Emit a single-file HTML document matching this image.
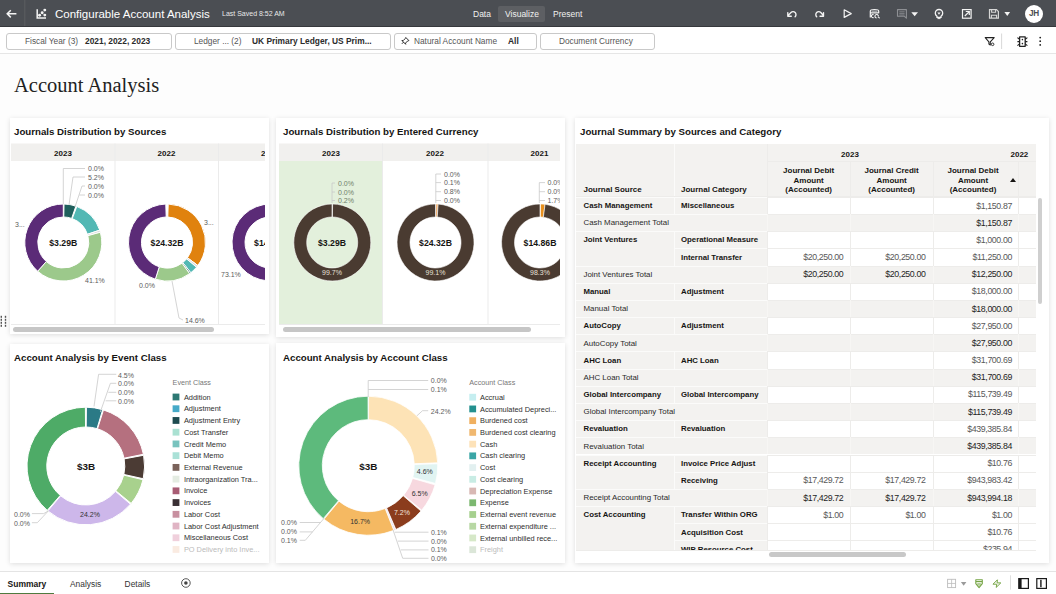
<!DOCTYPE html><html><head><meta charset="utf-8"><style>
*{box-sizing:border-box;margin:0;padding:0}
html,body{width:1056px;height:594px;overflow:hidden;background:#fdfdfd;font-family:"Liberation Sans",sans-serif;color:#161513}
.a{position:absolute;white-space:nowrap}
#top{position:absolute;left:0;top:0;width:1056px;height:27px;background:#4b4e53}
#fbar{position:absolute;left:0;top:27px;width:1056px;height:27px;background:#fff;border-bottom:1px solid #e6e6e6}
.pill{position:absolute;top:33px;height:17px;border:1px solid #c9c9c9;border-radius:3px;background:#fff;font-size:8.3px;line-height:15px;color:#555}
.pill b{color:#2b2b2b;font-weight:bold;font-size:8.4px}
.card{position:absolute;background:#fff;box-shadow:0 1px 5px rgba(0,0,0,.13)}
.ct{position:absolute;font-size:9.7px;font-weight:bold;color:#161513}
#bbar{position:absolute;left:0;top:571px;width:1056px;height:23px;background:#fff;border-top:1px solid #e4e4e4}
.tb{position:absolute;font-size:8px;color:#333}
.lg{position:absolute;font-size:7.2px;color:#444}
</style></head><body>
<div id="top">
</div>
<div class="a" style="left:55px;top:7.7px;font-size:11.5px;color:#fff">Configurable Account Analysis</div>
<div class="a" style="left:222px;top:10px;font-size:7px;color:#e8e8e8">Last Saved 8:52 AM</div>
<div class="a" style="left:498px;top:6px;width:47px;height:16px;background:#5d5f63;border-radius:2px"></div>
<div class="a" style="left:473px;top:9px;font-size:8.5px;color:#f0f0f0">Data</div>
<div class="a" style="left:505px;top:9px;font-size:8.5px;color:#f0f0f0">Visualize</div>
<div class="a" style="left:553px;top:9px;font-size:8.5px;color:#f0f0f0">Present</div>
<div class="a" style="left:1025px;top:5px;width:18px;height:18px;border-radius:50%;background:#fff;font-size:8.2px;font-weight:bold;color:#4b4e53;text-align:center;line-height:18px;letter-spacing:-0.3px">JH</div>
<div id="fbar"></div>
<div class="pill" style="left:6px;width:166px"><span class="a" style="left:18px">Fiscal Year (3)</span><b class="a" style="left:78px">2021, 2022, 2023</b></div>
<div class="pill" style="left:175px;width:216px"><span class="a" style="left:18px">Ledger ... (2)</span><b class="a" style="left:76px">UK Primary Ledger, US Prim...</b></div>
<div class="pill" style="left:394px;width:143px"><span class="a" style="left:19px">Natural Account Name</span><b class="a" style="left:113px">All</b></div>
<div class="pill" style="left:540px;width:115px"><span class="a" style="left:18px">Document Currency</span></div>
<div class="a" style="left:14px;top:73.5px;font-family:'Liberation Serif',serif;font-size:20.5px;color:#222">Account Analysis</div>
<div class="card" style="left:10px;top:117.5px;width:259px;height:216.5px"></div>
<div class="card" style="left:276px;top:117.5px;width:289px;height:219.5px"></div>
<div class="card" style="left:574.5px;top:117.5px;width:474.5px;height:445.5px"></div>
<div class="card" style="left:10px;top:343.5px;width:259px;height:219.5px"></div>
<div class="card" style="left:276px;top:343px;width:289px;height:220px"></div>
<div class="ct" style="left:14px;top:126px">Journals Distribution by Sources</div>
<div class="ct" style="left:283px;top:126px">Journals Distribution by Entered Currency</div>
<div class="ct" style="left:580px;top:126px">Journal Summary by Sources and Category</div>
<div class="ct" style="left:14px;top:352px">Account Analysis by Event Class</div>
<div class="ct" style="left:283px;top:352px">Account Analysis by Account Class</div>
<svg class="a" style="left:0;top:0" width="1056" height="594" font-family="Liberation Sans, sans-serif"><defs><clipPath id="c1"><rect x="11" y="143" width="254" height="191"/></clipPath><clipPath id="c2"><rect x="279" y="143" width="281" height="191"/></clipPath></defs><g clip-path="url(#c1)"><rect x="11" y="143.5" width="254" height="17.5" fill="#f1f0ee"/><rect x="114.5" y="143.5" width="1" height="181" fill="#ebebeb"/><rect x="218" y="143.5" width="1" height="181" fill="#ebebeb"/><rect x="11" y="324" width="254" height="1" fill="#ebebeb"/><text x="63" y="156" font-size="8" fill="#161513" text-anchor="middle" font-weight="bold">2023</text><text x="166.5" y="156" font-size="8" fill="#161513" text-anchor="middle" font-weight="bold">2022</text><text x="270" y="156" font-size="8" fill="#161513" text-anchor="middle" font-weight="bold">2021</text><path d="M64.03 204.01A38.5 38.5 0 0 1 75.89 206.12L71.64 218.40A25.5 25.5 0 0 0 63.78 217.00Z" fill="#1f5f5c" stroke="#fff" stroke-width="1"/><path d="M76.80 206.44A38.5 38.5 0 0 1 99.76 230.14L87.45 234.32A25.5 25.5 0 0 0 72.24 218.62Z" fill="#52b8b4" stroke="#fff" stroke-width="1"/><path d="M99.76 230.14A38.5 38.5 0 0 1 100.40 232.22L87.87 235.69A25.5 25.5 0 0 0 87.45 234.32Z" fill="#dcdcdc" stroke="#fff" stroke-width="1"/><path d="M100.40 232.22A38.5 38.5 0 0 1 37.66 271.22L46.32 261.52A25.5 25.5 0 0 0 87.87 235.69Z" fill="#9cc98b" stroke="#fff" stroke-width="1"/><path d="M37.66 271.22A38.5 38.5 0 0 1 63.30 204.00L63.30 217.00A25.5 25.5 0 0 0 46.32 261.52Z" fill="#5b2b77" stroke="#fff" stroke-width="1"/><path d="M168.21 204.02A38.5 38.5 0 0 1 197.86 265.52L187.44 257.75A25.5 25.5 0 0 0 167.80 217.01Z" fill="#e0820e" stroke="#fff" stroke-width="1"/><path d="M197.86 265.52A38.5 38.5 0 0 1 196.51 267.23L186.55 258.88A25.5 25.5 0 0 0 187.44 257.75Z" fill="#dcdcdc" stroke="#fff" stroke-width="1"/><path d="M196.51 267.23A38.5 38.5 0 0 1 190.79 272.77L182.76 262.55A25.5 25.5 0 0 0 186.55 258.88Z" fill="#52b8b4" stroke="#fff" stroke-width="1"/><path d="M190.79 272.77A38.5 38.5 0 0 1 189.63 273.65L181.99 263.13A25.5 25.5 0 0 0 182.76 262.55Z" fill="#1f5f5c" stroke="#fff" stroke-width="1"/><path d="M189.63 273.65A38.5 38.5 0 0 1 155.33 279.19L159.27 266.80A25.5 25.5 0 0 0 181.99 263.13Z" fill="#9cc98b" stroke="#fff" stroke-width="1"/><path d="M155.33 279.19A38.5 38.5 0 0 1 165.79 204.02L166.20 217.01A25.5 25.5 0 0 0 159.27 266.80Z" fill="#5b2b77" stroke="#fff" stroke-width="1"/><path d="M271.71 204.02A38.5 38.5 0 0 1 307.47 231.76L294.99 235.39A25.5 25.5 0 0 0 271.30 217.01Z" fill="#e0820e" stroke="#fff" stroke-width="1"/><path d="M307.47 231.76A38.5 38.5 0 0 1 308.98 243.71L295.99 243.30A25.5 25.5 0 0 0 294.99 235.39Z" fill="#52b8b4" stroke="#fff" stroke-width="1"/><path d="M308.98 243.71A38.5 38.5 0 0 1 308.73 247.09L295.82 245.54A25.5 25.5 0 0 0 295.99 243.30Z" fill="#9cc98b" stroke="#fff" stroke-width="1"/><path d="M308.73 247.09A38.5 38.5 0 1 1 270.50 204.00L270.50 217.00A25.5 25.5 0 1 0 295.82 245.54Z" fill="#5b2b77" stroke="#fff" stroke-width="1"/><polyline points="63.3,204 63.3,168.5 85,168.5" fill="none" stroke="#c9c9c9" stroke-width="0.8"/><polyline points="69,205 73,177 85,177" fill="none" stroke="#c9c9c9" stroke-width="0.8"/><polyline points="75,207 82,186 85,186" fill="none" stroke="#c9c9c9" stroke-width="0.8"/><polyline points="79.3,195 85,195" fill="none" stroke="#c9c9c9" stroke-width="0.8"/><text x="88" y="171.0" font-size="7" fill="#5c5c5c" text-anchor="start" font-weight="normal">0.0%</text><text x="88" y="179.5" font-size="7" fill="#5c5c5c" text-anchor="start" font-weight="normal">5.2%</text><text x="88" y="188.5" font-size="7" fill="#5c5c5c" text-anchor="start" font-weight="normal">0.0%</text><text x="88" y="197.5" font-size="7" fill="#5c5c5c" text-anchor="start" font-weight="normal">0.0%</text><text x="15" y="227" font-size="7" fill="#5c5c5c" text-anchor="start" font-weight="normal">3...</text><text x="85" y="283" font-size="7" fill="#5c5c5c" text-anchor="start" font-weight="normal">41.1%</text><text x="204" y="225" font-size="7" fill="#5c5c5c" text-anchor="start" font-weight="normal">3...</text><text x="139" y="288" font-size="7" fill="#5c5c5c" text-anchor="start" font-weight="normal">0.0%</text><polyline points="172,281 179,318 183,320" fill="none" stroke="#c9c9c9" stroke-width="0.8"/><text x="185" y="322.5" font-size="7" fill="#5c5c5c" text-anchor="start" font-weight="normal">14.6%</text><text x="221" y="276.5" font-size="7" fill="#5c5c5c" text-anchor="start" font-weight="normal">73.1%</text></g><g clip-path="url(#c2)"><rect x="279" y="143.5" width="285" height="17.5" fill="#f1f0ee"/><rect x="279" y="161" width="103" height="163.5" fill="#e3f0dc"/><rect x="382" y="143.5" width="1" height="181" fill="#ebebeb"/><rect x="487.5" y="143.5" width="1" height="181" fill="#ebebeb"/><rect x="279" y="324" width="285" height="1" fill="#ebebeb"/><text x="331" y="156" font-size="8" fill="#161513" text-anchor="middle" font-weight="bold">2023</text><text x="435" y="156" font-size="8" fill="#161513" text-anchor="middle" font-weight="bold">2022</text><text x="539.5" y="156" font-size="8" fill="#161513" text-anchor="middle" font-weight="bold">2021</text><path d="M332.00 204.00A38.5 38.5 0 0 1 332.36 204.00L332.24 217.00A25.5 25.5 0 0 0 332.00 217.00Z" fill="#e6e6e6" stroke="#fff" stroke-width="0.6"/><path d="M332.60 204.00A38.5 38.5 0 1 1 332.00 204.00L332.00 217.00A25.5 25.5 0 1 0 332.40 217.00Z" fill="#4a3b31" stroke="#fff" stroke-width="0.6"/><path d="M435.98 204.00A38.5 38.5 0 0 1 438.16 204.09L437.26 217.06A25.5 25.5 0 0 0 435.82 217.00Z" fill="#f0a050" stroke="#fff" stroke-width="0.6"/><path d="M438.16 204.09A38.5 38.5 0 1 1 435.50 204.00L435.50 217.00A25.5 25.5 0 1 0 437.26 217.06Z" fill="#4a3b31" stroke="#fff" stroke-width="0.6"/><path d="M540.48 204.00A38.5 38.5 0 0 1 545.07 204.33L543.35 217.22A25.5 25.5 0 0 0 540.32 217.00Z" fill="#e8901e" stroke="#fff" stroke-width="0.6"/><path d="M545.07 204.33A38.5 38.5 0 1 1 540.00 204.00L540.00 217.00A25.5 25.5 0 1 0 543.35 217.22Z" fill="#4a3b31" stroke="#fff" stroke-width="0.6"/><polyline points="332,203 332,183 335,183" fill="none" stroke="#c9c9c9" stroke-width="0.8"/><polyline points="332,192 335,192" fill="none" stroke="#c9c9c9" stroke-width="0.8"/><polyline points="332,200.5 335,200.5" fill="none" stroke="#c9c9c9" stroke-width="0.8"/><text x="338" y="185.5" font-size="7" fill="#6f7f6a" text-anchor="start" font-weight="normal">0.0%</text><text x="338" y="194.5" font-size="7" fill="#6f7f6a" text-anchor="start" font-weight="normal">0.0%</text><text x="338" y="203.0" font-size="7" fill="#6f7f6a" text-anchor="start" font-weight="normal">0.2%</text><polyline points="435.8,203 435.8,174 441,174" fill="none" stroke="#c9c9c9" stroke-width="0.8"/><polyline points="435.8,182.6 441,182.6" fill="none" stroke="#c9c9c9" stroke-width="0.8"/><polyline points="435.8,191.7 441,191.7" fill="none" stroke="#c9c9c9" stroke-width="0.8"/><polyline points="435.8,200.5 441,200.5" fill="none" stroke="#c9c9c9" stroke-width="0.8"/><text x="444" y="176.7" font-size="7" fill="#5c5c5c" text-anchor="start" font-weight="normal">0.0%</text><text x="444" y="185.1" font-size="7" fill="#5c5c5c" text-anchor="start" font-weight="normal">0.1%</text><text x="444" y="194.2" font-size="7" fill="#5c5c5c" text-anchor="start" font-weight="normal">0.8%</text><text x="444" y="203.0" font-size="7" fill="#5c5c5c" text-anchor="start" font-weight="normal">0.0%</text><polyline points="539.3,203 539.3,182.6 545,182.6" fill="none" stroke="#c9c9c9" stroke-width="0.8"/><polyline points="539.3,191.7 545,191.7" fill="none" stroke="#c9c9c9" stroke-width="0.8"/><polyline points="539.3,200.5 545,200.5" fill="none" stroke="#c9c9c9" stroke-width="0.8"/><text x="547.5" y="185.1" font-size="7" fill="#5c5c5c" text-anchor="start" font-weight="normal">0.0%</text><text x="547.5" y="194.2" font-size="7" fill="#5c5c5c" text-anchor="start" font-weight="normal">0.0%</text><text x="547.5" y="203.0" font-size="7" fill="#5c5c5c" text-anchor="start" font-weight="normal">1.7%</text><text x="332" y="275" font-size="7" fill="#e8e0d8" text-anchor="middle" font-weight="normal">99.7%</text><text x="435.5" y="275" font-size="7" fill="#e8e0d8" text-anchor="middle" font-weight="normal">99.1%</text><text x="540" y="275" font-size="7" fill="#e8e0d8" text-anchor="middle" font-weight="normal">98.3%</text></g><g clip-path="url(#c1)"><text x="63.3" y="246" font-size="8.7" fill="#161513" text-anchor="middle" font-weight="bold">$3.29B</text><text x="167" y="246" font-size="8.7" fill="#161513" text-anchor="middle" font-weight="bold">$24.32B</text><text x="270.5" y="246" font-size="8.7" fill="#161513" text-anchor="middle" font-weight="bold">$14.86B</text></g><g clip-path="url(#c2)"><text x="332" y="246" font-size="8.7" fill="#161513" text-anchor="middle" font-weight="bold">$3.29B</text><text x="435.5" y="246" font-size="8.7" fill="#161513" text-anchor="middle" font-weight="bold">$24.32B</text><text x="540" y="246" font-size="8.7" fill="#161513" text-anchor="middle" font-weight="bold">$14.86B</text></g><rect x="13" y="327" width="201" height="5" rx="2.5" fill="#c6c6c6"/><rect x="283" y="327" width="248" height="5" rx="2.5" fill="#c6c6c6"/></svg>
<svg class="a" style="left:0;top:0" width="1056" height="594" font-family="Liberation Sans, sans-serif"><path d="M86.42 407.20A58.8 58.8 0 0 1 102.70 409.68L97.01 428.64A39 39 0 0 0 86.21 427.00Z" fill="#2b7a86" stroke="#fff" stroke-width="1"/><path d="M103.48 409.92A58.8 58.8 0 0 1 143.42 454.28L124.02 458.22A39 39 0 0 0 97.53 428.81Z" fill="#b5707f" stroke="#fff" stroke-width="1"/><path d="M143.62 455.28A58.8 58.8 0 0 1 143.21 478.73L123.88 474.44A39 39 0 0 0 124.15 458.89Z" fill="#4b3b34" stroke="#fff" stroke-width="1"/><path d="M142.98 479.73A58.8 58.8 0 0 1 131.17 503.40L115.89 490.81A39 39 0 0 0 123.72 475.10Z" fill="#a8d18d" stroke="#fff" stroke-width="1"/><path d="M130.51 504.19A58.8 58.8 0 0 1 47.85 510.91L60.63 495.79A39 39 0 0 0 115.46 491.33Z" fill="#cdb7ea" stroke="#fff" stroke-width="1"/><path d="M47.22 510.38A58.8 58.8 0 0 1 85.39 407.20L85.53 427.00A39 39 0 0 0 60.21 495.43Z" fill="#4eab67" stroke="#fff" stroke-width="1"/><polyline points="94,406.5 98.6,374.3 116.3,374.3" fill="none" stroke="#c9c9c9" stroke-width="0.8"/><polyline points="100.3,412 110.4,383.3 116.3,383.3" fill="none" stroke="#c9c9c9" stroke-width="0.8"/><polyline points="108.3,392.3 116.3,392.3" fill="none" stroke="#c9c9c9" stroke-width="0.8"/><polyline points="105.6,400.8 116.3,400.8" fill="none" stroke="#c9c9c9" stroke-width="0.8"/><text x="118" y="377.6" font-size="7" fill="#5c5c5c" text-anchor="start" font-weight="normal">4.5%</text><text x="118" y="386.4" font-size="7" fill="#5c5c5c" text-anchor="start" font-weight="normal">0.0%</text><text x="118" y="395.3" font-size="7" fill="#5c5c5c" text-anchor="start" font-weight="normal">0.0%</text><text x="118" y="403.7" font-size="7" fill="#5c5c5c" text-anchor="start" font-weight="normal">0.0%</text><polyline points="48.4,510.9 43.7,513.6 31.9,513.6" fill="none" stroke="#c9c9c9" stroke-width="0.8"/><polyline points="48.4,510.9 37.3,522.7 31.9,522.7" fill="none" stroke="#c9c9c9" stroke-width="0.8"/><text x="14" y="517" font-size="7" fill="#5c5c5c" text-anchor="start" font-weight="normal">0.0%</text><text x="14" y="525.8" font-size="7" fill="#5c5c5c" text-anchor="start" font-weight="normal">0.0%</text><text x="90" y="517" font-size="7" fill="#333" text-anchor="middle" font-weight="normal">24.2%</text><text x="86" y="470" font-size="9.9" fill="#161513" text-anchor="middle" font-weight="bold">$3B</text><text x="172.6" y="385" font-size="7.2" fill="#777" text-anchor="start" font-weight="normal">Event Class</text><rect x="172.6" y="393.60" width="6.8" height="6.8" fill="#2d7873"/><text x="183.9" y="399.6" font-size="7.4" fill="#2e2e2e" text-anchor="start" font-weight="normal">Addition</text><rect x="172.6" y="405.33" width="6.8" height="6.8" fill="#46aac8"/><text x="183.9" y="411.33000000000004" font-size="7.4" fill="#2e2e2e" text-anchor="start" font-weight="normal">Adjustment</text><rect x="172.6" y="417.06" width="6.8" height="6.8" fill="#1e4b50"/><text x="183.9" y="423.06" font-size="7.4" fill="#2e2e2e" text-anchor="start" font-weight="normal">Adjustment Entry</text><rect x="172.6" y="428.79" width="6.8" height="6.8" fill="#aae1d2"/><text x="183.9" y="434.79" font-size="7.4" fill="#2e2e2e" text-anchor="start" font-weight="normal">Cost Transfer</text><rect x="172.6" y="440.52" width="6.8" height="6.8" fill="#78c3be"/><text x="183.9" y="446.52000000000004" font-size="7.4" fill="#2e2e2e" text-anchor="start" font-weight="normal">Credit Memo</text><rect x="172.6" y="452.25" width="6.8" height="6.8" fill="#aae1d7"/><text x="183.9" y="458.25" font-size="7.4" fill="#2e2e2e" text-anchor="start" font-weight="normal">Debit Memo</text><rect x="172.6" y="463.98" width="6.8" height="6.8" fill="#7a625a"/><text x="183.9" y="469.98" font-size="7.4" fill="#2e2e2e" text-anchor="start" font-weight="normal">External Revenue</text><rect x="172.6" y="475.71" width="6.8" height="6.8" fill="#e4ece2"/><text x="183.9" y="481.71000000000004" font-size="7.4" fill="#2e2e2e" text-anchor="start" font-weight="normal">Intraorganization Tra...</text><rect x="172.6" y="487.44" width="6.8" height="6.8" fill="#a85c74"/><text x="183.9" y="493.44000000000005" font-size="7.4" fill="#2e2e2e" text-anchor="start" font-weight="normal">Invoice</text><rect x="172.6" y="499.17" width="6.8" height="6.8" fill="#3a3034"/><text x="183.9" y="505.17" font-size="7.4" fill="#2e2e2e" text-anchor="start" font-weight="normal">Invoices</text><rect x="172.6" y="510.90" width="6.8" height="6.8" fill="#c890a0"/><text x="183.9" y="516.9" font-size="7.4" fill="#2e2e2e" text-anchor="start" font-weight="normal">Labor Cost</text><rect x="172.6" y="522.63" width="6.8" height="6.8" fill="#e0b4c4"/><text x="183.9" y="528.63" font-size="7.4" fill="#2e2e2e" text-anchor="start" font-weight="normal">Labor Cost Adjustment</text><rect x="172.6" y="534.36" width="6.8" height="6.8" fill="#f0d0dc"/><text x="183.9" y="540.36" font-size="7.4" fill="#2e2e2e" text-anchor="start" font-weight="normal">Miscellaneous Cost</text><rect x="172.6" y="546.09" width="6.8" height="6.8" fill="#f3d2bc" opacity="0.45"/><text x="183.9" y="552.09" font-size="7.4" fill="#bbb" text-anchor="start" font-weight="normal">PO Delivery into Inve...</text><path d="M368.54 396.20A69.5 69.5 0 0 1 437.74 462.79L414.26 463.77A46 46 0 0 0 368.46 419.70Z" fill="#fde3b6" stroke="#fff" stroke-width="0.8"/><path d="M437.77 463.76A69.5 69.5 0 0 1 435.49 483.45L412.77 477.45A46 46 0 0 0 414.28 464.42Z" fill="#e1f4f2" stroke="#fff" stroke-width="0.8"/><path d="M435.11 484.86A69.5 69.5 0 0 1 421.70 510.19L403.64 495.15A46 46 0 0 0 412.52 478.38Z" fill="#f7d8df" stroke="#fff" stroke-width="0.8"/><path d="M420.99 511.02A69.5 69.5 0 0 1 395.90 529.48L386.57 507.92A46 46 0 0 0 403.17 495.70Z" fill="#8b3c1d" stroke="#fff" stroke-width="0.8"/><path d="M395.23 529.77A69.5 69.5 0 0 1 394.34 530.14L385.53 508.35A46 46 0 0 0 386.13 508.11Z" fill="#b89ad8" stroke="#fff" stroke-width="0.8"/><path d="M393.77 530.36A69.5 69.5 0 0 1 324.00 519.25L338.98 501.14A46 46 0 0 0 385.16 508.50Z" fill="#f5b962" stroke="#fff" stroke-width="0.8"/><path d="M323.26 518.63A69.5 69.5 0 0 1 368.06 396.20L368.14 419.70A46 46 0 0 0 338.49 500.73Z" fill="#5dba7c" stroke="#fff" stroke-width="0.8"/><polyline points="368.2,397 368.2,380.5 428.2,380.5" fill="none" stroke="#c9c9c9" stroke-width="0.8"/><polyline points="368.2,389.5 428.2,389.5" fill="none" stroke="#c9c9c9" stroke-width="0.8"/><polyline points="416.8,415.9 422.5,410.7 428.2,410.7" fill="none" stroke="#c9c9c9" stroke-width="0.8"/><text x="430.8" y="383.4" font-size="7" fill="#5c5c5c" text-anchor="start" font-weight="normal">0.0%</text><text x="430.8" y="392.4" font-size="7" fill="#5c5c5c" text-anchor="start" font-weight="normal">0.1%</text><text x="430.8" y="413.7" font-size="7" fill="#5c5c5c" text-anchor="start" font-weight="normal">24.2%</text><polyline points="393,529.8 402.7,558.3 428.5,558.3" fill="none" stroke="#c9c9c9" stroke-width="0.8"/><polyline points="394.748,532.2 428.5,532.2" fill="none" stroke="#c9c9c9" stroke-width="0.8"/><polyline points="397.774,541.1 428.5,541.1" fill="none" stroke="#c9c9c9" stroke-width="0.8"/><polyline points="400.766,549.9 428.5,549.9" fill="none" stroke="#c9c9c9" stroke-width="0.8"/><text x="430.9" y="534.7" font-size="7" fill="#5c5c5c" text-anchor="start" font-weight="normal">0.1%</text><text x="430.9" y="543.6" font-size="7" fill="#5c5c5c" text-anchor="start" font-weight="normal">0.0%</text><text x="430.9" y="552.4" font-size="7" fill="#5c5c5c" text-anchor="start" font-weight="normal">0.1%</text><text x="430.9" y="561.3" font-size="7" fill="#5c5c5c" text-anchor="start" font-weight="normal">0.0%</text><polyline points="324.6,517.7 305.3,540.3 299.7,540.3" fill="none" stroke="#c9c9c9" stroke-width="0.8"/><polyline points="320.6,522.5 299.7,522.5" fill="none" stroke="#c9c9c9" stroke-width="0.8"/><polyline points="312.5,531.9 299.7,531.9" fill="none" stroke="#c9c9c9" stroke-width="0.8"/><text x="281" y="525.1" font-size="7" fill="#5c5c5c" text-anchor="start" font-weight="normal">0.0%</text><text x="281" y="534.2" font-size="7" fill="#5c5c5c" text-anchor="start" font-weight="normal">0.0%</text><text x="281" y="542.9" font-size="7" fill="#5c5c5c" text-anchor="start" font-weight="normal">0.1%</text><text x="424.8" y="474.2" font-size="7" fill="#333" text-anchor="middle" font-weight="normal">4.6%</text><text x="419.7" y="496.1" font-size="7" fill="#333" text-anchor="middle" font-weight="normal">6.5%</text><text x="401.9" y="515" font-size="7" fill="#f3e6df" text-anchor="middle" font-weight="normal">7.2%</text><text x="360.1" y="524.1" font-size="7" fill="#333" text-anchor="middle" font-weight="normal">16.7%</text><text x="368.4" y="469.7" font-size="9.9" fill="#161513" text-anchor="middle" font-weight="bold">$3B</text><text x="469.3" y="385" font-size="7.2" fill="#777" text-anchor="start" font-weight="normal">Account Class</text><rect x="469.3" y="393.80" width="6.8" height="6.8" fill="#c5eef0"/><text x="480" y="399.8" font-size="7.4" fill="#2e2e2e" text-anchor="start" font-weight="normal">Accrual</text><rect x="469.3" y="405.53" width="6.8" height="6.8" fill="#23908f"/><text x="480" y="411.53000000000003" font-size="7.4" fill="#2e2e2e" text-anchor="start" font-weight="normal">Accumulated Depreci...</text><rect x="469.3" y="417.26" width="6.8" height="6.8" fill="#f0b060"/><text x="480" y="423.26" font-size="7.4" fill="#2e2e2e" text-anchor="start" font-weight="normal">Burdened cost</text><rect x="469.3" y="428.99" width="6.8" height="6.8" fill="#f0b870"/><text x="480" y="434.99" font-size="7.4" fill="#2e2e2e" text-anchor="start" font-weight="normal">Burdened cost clearing</text><rect x="469.3" y="440.72" width="6.8" height="6.8" fill="#fde2b8"/><text x="480" y="446.72" font-size="7.4" fill="#2e2e2e" text-anchor="start" font-weight="normal">Cash</text><rect x="469.3" y="452.45" width="6.8" height="6.8" fill="#3aa5a5"/><text x="480" y="458.45000000000005" font-size="7.4" fill="#2e2e2e" text-anchor="start" font-weight="normal">Cash clearing</text><rect x="469.3" y="464.18" width="6.8" height="6.8" fill="#e2f0f0"/><text x="480" y="470.18" font-size="7.4" fill="#2e2e2e" text-anchor="start" font-weight="normal">Cost</text><rect x="469.3" y="475.91" width="6.8" height="6.8" fill="#c8ece4"/><text x="480" y="481.91" font-size="7.4" fill="#2e2e2e" text-anchor="start" font-weight="normal">Cost clearing</text><rect x="469.3" y="487.64" width="6.8" height="6.8" fill="#d8b8b4"/><text x="480" y="493.64" font-size="7.4" fill="#2e2e2e" text-anchor="start" font-weight="normal">Depreciation Expense</text><rect x="469.3" y="499.37" width="6.8" height="6.8" fill="#7cb870"/><text x="480" y="505.37" font-size="7.4" fill="#2e2e2e" text-anchor="start" font-weight="normal">Expense</text><rect x="469.3" y="511.10" width="6.8" height="6.8" fill="#a6d08e"/><text x="480" y="517.1" font-size="7.4" fill="#2e2e2e" text-anchor="start" font-weight="normal">External event revenue</text><rect x="469.3" y="522.83" width="6.8" height="6.8" fill="#b8d8a4"/><text x="480" y="528.83" font-size="7.4" fill="#2e2e2e" text-anchor="start" font-weight="normal">External expenditure ...</text><rect x="469.3" y="534.56" width="6.8" height="6.8" fill="#d6e8c8"/><text x="480" y="540.5600000000001" font-size="7.4" fill="#2e2e2e" text-anchor="start" font-weight="normal">External unbilled rece...</text><rect x="469.3" y="546.29" width="6.8" height="6.8" fill="#b0c8a8" opacity="0.45"/><text x="480" y="552.2900000000001" font-size="7.4" fill="#bbb" text-anchor="start" font-weight="normal">Freight</text></svg>
<div class="a" style="left:576px;top:143.5px;width:468px;height:414px;overflow:hidden;font-size:8px"><div class="a" style="left:0.00px;top:0.00px;width:468.00px;height:53.30px;background:#f3f2f0"></div><div class="a" style="left:0.00px;top:53.30px;width:191.00px;height:17.18px;background:#f3f2f0"></div><div class="a" style="left:191.00px;top:53.30px;width:269.00px;height:17.18px;background:#fff"></div><div class="a" style="left:191.00px;top:53.30px;width:269.00px;height:0.70px;background:#edecea"></div><div class="a" style="left:0.00px;top:53.30px;width:191.00px;height:0.70px;background:#fbfbfa"></div><div class="a" style="left:7.50px;top:57.60px;font-weight:bold;color:#161513;font-size:7.8px">Cash Management</div><div class="a" style="left:105.00px;top:57.60px;font-weight:bold;color:#161513;font-size:7.8px">Miscellaneous</div><div class="a" style="left:235.90px;top:57.00px;width:200px;text-align:right;color:#585858;font-size:8.8px;letter-spacing:-0.4px">$1,150.87</div><div class="a" style="left:0.00px;top:70.48px;width:460.00px;height:17.18px;background:#f3f2f0"></div><div class="a" style="left:191.00px;top:70.48px;width:269.00px;height:0.70px;background:#edecea"></div><div class="a" style="left:0.00px;top:70.48px;width:191.00px;height:0.70px;background:#fbfbfa"></div><div class="a" style="left:7.50px;top:74.78px;color:#2a2a2a;font-size:7.9px">Cash Management Total</div><div class="a" style="left:235.90px;top:74.18px;width:200px;text-align:right;color:#1e1e1e;font-size:8.8px;letter-spacing:-0.4px">$1,150.87</div><div class="a" style="left:0.00px;top:87.66px;width:191.00px;height:17.18px;background:#f3f2f0"></div><div class="a" style="left:191.00px;top:87.66px;width:269.00px;height:17.18px;background:#fff"></div><div class="a" style="left:191.00px;top:87.66px;width:269.00px;height:0.70px;background:#edecea"></div><div class="a" style="left:0.00px;top:87.66px;width:191.00px;height:0.70px;background:#fbfbfa"></div><div class="a" style="left:7.50px;top:91.96px;font-weight:bold;color:#161513;font-size:7.8px">Joint Ventures</div><div class="a" style="left:105.00px;top:91.96px;font-weight:bold;color:#161513;font-size:7.8px">Operational Measure</div><div class="a" style="left:235.90px;top:91.36px;width:200px;text-align:right;color:#585858;font-size:8.8px;letter-spacing:-0.4px">$1,000.00</div><div class="a" style="left:0.00px;top:104.84px;width:191.00px;height:17.18px;background:#f3f2f0"></div><div class="a" style="left:191.00px;top:104.84px;width:269.00px;height:17.18px;background:#fff"></div><div class="a" style="left:191.00px;top:104.84px;width:269.00px;height:0.70px;background:#edecea"></div><div class="a" style="left:98.00px;top:104.84px;width:93.00px;height:0.70px;background:#fbfbfa"></div><div class="a" style="left:105.00px;top:109.14px;font-weight:bold;color:#161513;font-size:7.8px">Internal Transfer</div><div class="a" style="left:67.20px;top:108.54px;width:200px;text-align:right;color:#585858;font-size:8.8px;letter-spacing:-0.4px">$20,250.00</div><div class="a" style="left:149.40px;top:108.54px;width:200px;text-align:right;color:#585858;font-size:8.8px;letter-spacing:-0.4px">$20,250.00</div><div class="a" style="left:235.90px;top:108.54px;width:200px;text-align:right;color:#585858;font-size:8.8px;letter-spacing:-0.4px">$11,250.00</div><div class="a" style="left:0.00px;top:122.02px;width:460.00px;height:17.18px;background:#f3f2f0"></div><div class="a" style="left:191.00px;top:122.02px;width:269.00px;height:0.70px;background:#edecea"></div><div class="a" style="left:0.00px;top:122.02px;width:191.00px;height:0.70px;background:#fbfbfa"></div><div class="a" style="left:7.50px;top:126.32px;color:#2a2a2a;font-size:7.9px">Joint Ventures Total</div><div class="a" style="left:67.20px;top:125.72px;width:200px;text-align:right;color:#1e1e1e;font-size:8.8px;letter-spacing:-0.4px">$20,250.00</div><div class="a" style="left:149.40px;top:125.72px;width:200px;text-align:right;color:#1e1e1e;font-size:8.8px;letter-spacing:-0.4px">$20,250.00</div><div class="a" style="left:235.90px;top:125.72px;width:200px;text-align:right;color:#1e1e1e;font-size:8.8px;letter-spacing:-0.4px">$12,250.00</div><div class="a" style="left:0.00px;top:139.20px;width:191.00px;height:17.18px;background:#f3f2f0"></div><div class="a" style="left:191.00px;top:139.20px;width:269.00px;height:17.18px;background:#fff"></div><div class="a" style="left:191.00px;top:139.20px;width:269.00px;height:0.70px;background:#edecea"></div><div class="a" style="left:0.00px;top:139.20px;width:191.00px;height:0.70px;background:#fbfbfa"></div><div class="a" style="left:7.50px;top:143.50px;font-weight:bold;color:#161513;font-size:7.8px">Manual</div><div class="a" style="left:105.00px;top:143.50px;font-weight:bold;color:#161513;font-size:7.8px">Adjustment</div><div class="a" style="left:235.90px;top:142.90px;width:200px;text-align:right;color:#585858;font-size:8.8px;letter-spacing:-0.4px">$18,000.00</div><div class="a" style="left:0.00px;top:156.38px;width:460.00px;height:17.18px;background:#f3f2f0"></div><div class="a" style="left:191.00px;top:156.38px;width:269.00px;height:0.70px;background:#edecea"></div><div class="a" style="left:0.00px;top:156.38px;width:191.00px;height:0.70px;background:#fbfbfa"></div><div class="a" style="left:7.50px;top:160.68px;color:#2a2a2a;font-size:7.9px">Manual Total</div><div class="a" style="left:235.90px;top:160.08px;width:200px;text-align:right;color:#1e1e1e;font-size:8.8px;letter-spacing:-0.4px">$18,000.00</div><div class="a" style="left:0.00px;top:173.56px;width:191.00px;height:17.18px;background:#f3f2f0"></div><div class="a" style="left:191.00px;top:173.56px;width:269.00px;height:17.18px;background:#fff"></div><div class="a" style="left:191.00px;top:173.56px;width:269.00px;height:0.70px;background:#edecea"></div><div class="a" style="left:0.00px;top:173.56px;width:191.00px;height:0.70px;background:#fbfbfa"></div><div class="a" style="left:7.50px;top:177.86px;font-weight:bold;color:#161513;font-size:7.8px">AutoCopy</div><div class="a" style="left:105.00px;top:177.86px;font-weight:bold;color:#161513;font-size:7.8px">Adjustment</div><div class="a" style="left:235.90px;top:177.26px;width:200px;text-align:right;color:#585858;font-size:8.8px;letter-spacing:-0.4px">$27,950.00</div><div class="a" style="left:0.00px;top:190.74px;width:460.00px;height:17.18px;background:#f3f2f0"></div><div class="a" style="left:191.00px;top:190.74px;width:269.00px;height:0.70px;background:#edecea"></div><div class="a" style="left:0.00px;top:190.74px;width:191.00px;height:0.70px;background:#fbfbfa"></div><div class="a" style="left:7.50px;top:195.04px;color:#2a2a2a;font-size:7.9px">AutoCopy Total</div><div class="a" style="left:235.90px;top:194.44px;width:200px;text-align:right;color:#1e1e1e;font-size:8.8px;letter-spacing:-0.4px">$27,950.00</div><div class="a" style="left:0.00px;top:207.92px;width:191.00px;height:17.18px;background:#f3f2f0"></div><div class="a" style="left:191.00px;top:207.92px;width:269.00px;height:17.18px;background:#fff"></div><div class="a" style="left:191.00px;top:207.92px;width:269.00px;height:0.70px;background:#edecea"></div><div class="a" style="left:0.00px;top:207.92px;width:191.00px;height:0.70px;background:#fbfbfa"></div><div class="a" style="left:7.50px;top:212.22px;font-weight:bold;color:#161513;font-size:7.8px">AHC Loan</div><div class="a" style="left:105.00px;top:212.22px;font-weight:bold;color:#161513;font-size:7.8px">AHC Loan</div><div class="a" style="left:235.90px;top:211.62px;width:200px;text-align:right;color:#585858;font-size:8.8px;letter-spacing:-0.4px">$31,700.69</div><div class="a" style="left:0.00px;top:225.10px;width:460.00px;height:17.18px;background:#f3f2f0"></div><div class="a" style="left:191.00px;top:225.10px;width:269.00px;height:0.70px;background:#edecea"></div><div class="a" style="left:0.00px;top:225.10px;width:191.00px;height:0.70px;background:#fbfbfa"></div><div class="a" style="left:7.50px;top:229.40px;color:#2a2a2a;font-size:7.9px">AHC Loan Total</div><div class="a" style="left:235.90px;top:228.80px;width:200px;text-align:right;color:#1e1e1e;font-size:8.8px;letter-spacing:-0.4px">$31,700.69</div><div class="a" style="left:0.00px;top:242.28px;width:191.00px;height:17.18px;background:#f3f2f0"></div><div class="a" style="left:191.00px;top:242.28px;width:269.00px;height:17.18px;background:#fff"></div><div class="a" style="left:191.00px;top:242.28px;width:269.00px;height:0.70px;background:#edecea"></div><div class="a" style="left:0.00px;top:242.28px;width:191.00px;height:0.70px;background:#fbfbfa"></div><div class="a" style="left:7.50px;top:246.58px;font-weight:bold;color:#161513;font-size:7.8px">Global Intercompany</div><div class="a" style="left:105.00px;top:246.58px;font-weight:bold;color:#161513;font-size:7.8px">Global Intercompany</div><div class="a" style="left:235.90px;top:245.98px;width:200px;text-align:right;color:#585858;font-size:8.8px;letter-spacing:-0.4px">$115,739.49</div><div class="a" style="left:0.00px;top:259.46px;width:460.00px;height:17.18px;background:#f3f2f0"></div><div class="a" style="left:191.00px;top:259.46px;width:269.00px;height:0.70px;background:#edecea"></div><div class="a" style="left:0.00px;top:259.46px;width:191.00px;height:0.70px;background:#fbfbfa"></div><div class="a" style="left:7.50px;top:263.76px;color:#2a2a2a;font-size:7.9px">Global Intercompany Total</div><div class="a" style="left:235.90px;top:263.16px;width:200px;text-align:right;color:#1e1e1e;font-size:8.8px;letter-spacing:-0.4px">$115,739.49</div><div class="a" style="left:0.00px;top:276.64px;width:191.00px;height:17.18px;background:#f3f2f0"></div><div class="a" style="left:191.00px;top:276.64px;width:269.00px;height:17.18px;background:#fff"></div><div class="a" style="left:191.00px;top:276.64px;width:269.00px;height:0.70px;background:#edecea"></div><div class="a" style="left:0.00px;top:276.64px;width:191.00px;height:0.70px;background:#fbfbfa"></div><div class="a" style="left:7.50px;top:280.94px;font-weight:bold;color:#161513;font-size:7.8px">Revaluation</div><div class="a" style="left:105.00px;top:280.94px;font-weight:bold;color:#161513;font-size:7.8px">Revaluation</div><div class="a" style="left:235.90px;top:280.34px;width:200px;text-align:right;color:#585858;font-size:8.8px;letter-spacing:-0.4px">$439,385.84</div><div class="a" style="left:0.00px;top:293.82px;width:460.00px;height:17.18px;background:#f3f2f0"></div><div class="a" style="left:191.00px;top:293.82px;width:269.00px;height:0.70px;background:#edecea"></div><div class="a" style="left:0.00px;top:293.82px;width:191.00px;height:0.70px;background:#fbfbfa"></div><div class="a" style="left:7.50px;top:298.12px;color:#2a2a2a;font-size:7.9px">Revaluation Total</div><div class="a" style="left:235.90px;top:297.52px;width:200px;text-align:right;color:#1e1e1e;font-size:8.8px;letter-spacing:-0.4px">$439,385.84</div><div class="a" style="left:0.00px;top:311.00px;width:191.00px;height:17.18px;background:#f3f2f0"></div><div class="a" style="left:191.00px;top:311.00px;width:269.00px;height:17.18px;background:#fff"></div><div class="a" style="left:191.00px;top:311.00px;width:269.00px;height:0.70px;background:#edecea"></div><div class="a" style="left:0.00px;top:311.00px;width:191.00px;height:0.70px;background:#fbfbfa"></div><div class="a" style="left:7.50px;top:315.30px;font-weight:bold;color:#161513;font-size:7.8px">Receipt Accounting</div><div class="a" style="left:105.00px;top:315.30px;font-weight:bold;color:#161513;font-size:7.8px">Invoice Price Adjust</div><div class="a" style="left:235.90px;top:314.70px;width:200px;text-align:right;color:#585858;font-size:8.8px;letter-spacing:-0.4px">$10.76</div><div class="a" style="left:0.00px;top:328.18px;width:191.00px;height:17.18px;background:#f3f2f0"></div><div class="a" style="left:191.00px;top:328.18px;width:269.00px;height:17.18px;background:#fff"></div><div class="a" style="left:191.00px;top:328.18px;width:269.00px;height:0.70px;background:#edecea"></div><div class="a" style="left:98.00px;top:328.18px;width:93.00px;height:0.70px;background:#fbfbfa"></div><div class="a" style="left:105.00px;top:332.48px;font-weight:bold;color:#161513;font-size:7.8px">Receiving</div><div class="a" style="left:67.20px;top:331.88px;width:200px;text-align:right;color:#585858;font-size:8.8px;letter-spacing:-0.4px">$17,429.72</div><div class="a" style="left:149.40px;top:331.88px;width:200px;text-align:right;color:#585858;font-size:8.8px;letter-spacing:-0.4px">$17,429.72</div><div class="a" style="left:235.90px;top:331.88px;width:200px;text-align:right;color:#585858;font-size:8.8px;letter-spacing:-0.4px">$943,983.42</div><div class="a" style="left:0.00px;top:345.36px;width:460.00px;height:17.18px;background:#f3f2f0"></div><div class="a" style="left:191.00px;top:345.36px;width:269.00px;height:0.70px;background:#edecea"></div><div class="a" style="left:0.00px;top:345.36px;width:191.00px;height:0.70px;background:#fbfbfa"></div><div class="a" style="left:7.50px;top:349.66px;color:#2a2a2a;font-size:7.9px">Receipt Accounting Total</div><div class="a" style="left:67.20px;top:349.06px;width:200px;text-align:right;color:#1e1e1e;font-size:8.8px;letter-spacing:-0.4px">$17,429.72</div><div class="a" style="left:149.40px;top:349.06px;width:200px;text-align:right;color:#1e1e1e;font-size:8.8px;letter-spacing:-0.4px">$17,429.72</div><div class="a" style="left:235.90px;top:349.06px;width:200px;text-align:right;color:#1e1e1e;font-size:8.8px;letter-spacing:-0.4px">$943,994.18</div><div class="a" style="left:0.00px;top:362.54px;width:191.00px;height:17.18px;background:#f3f2f0"></div><div class="a" style="left:191.00px;top:362.54px;width:269.00px;height:17.18px;background:#fff"></div><div class="a" style="left:191.00px;top:362.54px;width:269.00px;height:0.70px;background:#edecea"></div><div class="a" style="left:0.00px;top:362.54px;width:191.00px;height:0.70px;background:#fbfbfa"></div><div class="a" style="left:7.50px;top:366.84px;font-weight:bold;color:#161513;font-size:7.8px">Cost Accounting</div><div class="a" style="left:105.00px;top:366.84px;font-weight:bold;color:#161513;font-size:7.8px">Transfer Within ORG</div><div class="a" style="left:67.20px;top:366.24px;width:200px;text-align:right;color:#585858;font-size:8.8px;letter-spacing:-0.4px">$1.00</div><div class="a" style="left:149.40px;top:366.24px;width:200px;text-align:right;color:#585858;font-size:8.8px;letter-spacing:-0.4px">$1.00</div><div class="a" style="left:235.90px;top:366.24px;width:200px;text-align:right;color:#585858;font-size:8.8px;letter-spacing:-0.4px">$1.00</div><div class="a" style="left:0.00px;top:379.72px;width:191.00px;height:17.18px;background:#f3f2f0"></div><div class="a" style="left:191.00px;top:379.72px;width:269.00px;height:17.18px;background:#fff"></div><div class="a" style="left:191.00px;top:379.72px;width:269.00px;height:0.70px;background:#edecea"></div><div class="a" style="left:98.00px;top:379.72px;width:93.00px;height:0.70px;background:#fbfbfa"></div><div class="a" style="left:105.00px;top:384.02px;font-weight:bold;color:#161513;font-size:7.8px">Acquisition Cost</div><div class="a" style="left:235.90px;top:383.42px;width:200px;text-align:right;color:#585858;font-size:8.8px;letter-spacing:-0.4px">$10.76</div><div class="a" style="left:0.00px;top:396.90px;width:191.00px;height:17.18px;background:#f3f2f0"></div><div class="a" style="left:191.00px;top:396.90px;width:269.00px;height:17.18px;background:#fff"></div><div class="a" style="left:191.00px;top:396.90px;width:269.00px;height:0.70px;background:#edecea"></div><div class="a" style="left:98.00px;top:396.90px;width:93.00px;height:0.70px;background:#fbfbfa"></div><div class="a" style="left:105.00px;top:401.20px;font-weight:bold;color:#161513;font-size:7.8px">WIP Resource Cost</div><div class="a" style="left:235.90px;top:400.60px;width:200px;text-align:right;color:#585858;font-size:8.8px;letter-spacing:-0.4px">$235.94</div><div class="a" style="left:191.00px;top:17.00px;width:0.80px;height:36.30px;background:#edecea"></div><div class="a" style="left:274.30px;top:17.00px;width:0.80px;height:36.30px;background:#edecea"></div><div class="a" style="left:357.00px;top:17.00px;width:0.80px;height:36.30px;background:#edecea"></div><div class="a" style="left:442.00px;top:17.00px;width:0.80px;height:36.30px;background:#edecea"></div><div class="a" style="left:98.00px;top:0.00px;width:0.80px;height:53.30px;background:#fbfbfa"></div><div class="a" style="left:191.00px;top:53.30px;width:0.80px;height:17.18px;background:#edecea"></div><div class="a" style="left:274.30px;top:53.30px;width:0.80px;height:17.18px;background:#edecea"></div><div class="a" style="left:357.00px;top:53.30px;width:0.80px;height:17.18px;background:#edecea"></div><div class="a" style="left:442.00px;top:53.30px;width:0.80px;height:17.18px;background:#edecea"></div><div class="a" style="left:98.00px;top:53.30px;width:0.80px;height:17.18px;background:#fbfbfa"></div><div class="a" style="left:191.00px;top:70.48px;width:0.80px;height:17.18px;background:#f7f6f4"></div><div class="a" style="left:274.30px;top:70.48px;width:0.80px;height:17.18px;background:#f7f6f4"></div><div class="a" style="left:357.00px;top:70.48px;width:0.80px;height:17.18px;background:#f7f6f4"></div><div class="a" style="left:442.00px;top:70.48px;width:0.80px;height:17.18px;background:#f7f6f4"></div><div class="a" style="left:191.00px;top:87.66px;width:0.80px;height:17.18px;background:#edecea"></div><div class="a" style="left:274.30px;top:87.66px;width:0.80px;height:17.18px;background:#edecea"></div><div class="a" style="left:357.00px;top:87.66px;width:0.80px;height:17.18px;background:#edecea"></div><div class="a" style="left:442.00px;top:87.66px;width:0.80px;height:17.18px;background:#edecea"></div><div class="a" style="left:98.00px;top:87.66px;width:0.80px;height:17.18px;background:#fbfbfa"></div><div class="a" style="left:191.00px;top:104.84px;width:0.80px;height:17.18px;background:#edecea"></div><div class="a" style="left:274.30px;top:104.84px;width:0.80px;height:17.18px;background:#edecea"></div><div class="a" style="left:357.00px;top:104.84px;width:0.80px;height:17.18px;background:#edecea"></div><div class="a" style="left:442.00px;top:104.84px;width:0.80px;height:17.18px;background:#edecea"></div><div class="a" style="left:98.00px;top:104.84px;width:0.80px;height:17.18px;background:#fbfbfa"></div><div class="a" style="left:191.00px;top:122.02px;width:0.80px;height:17.18px;background:#f7f6f4"></div><div class="a" style="left:274.30px;top:122.02px;width:0.80px;height:17.18px;background:#f7f6f4"></div><div class="a" style="left:357.00px;top:122.02px;width:0.80px;height:17.18px;background:#f7f6f4"></div><div class="a" style="left:442.00px;top:122.02px;width:0.80px;height:17.18px;background:#f7f6f4"></div><div class="a" style="left:191.00px;top:139.20px;width:0.80px;height:17.18px;background:#edecea"></div><div class="a" style="left:274.30px;top:139.20px;width:0.80px;height:17.18px;background:#edecea"></div><div class="a" style="left:357.00px;top:139.20px;width:0.80px;height:17.18px;background:#edecea"></div><div class="a" style="left:442.00px;top:139.20px;width:0.80px;height:17.18px;background:#edecea"></div><div class="a" style="left:98.00px;top:139.20px;width:0.80px;height:17.18px;background:#fbfbfa"></div><div class="a" style="left:191.00px;top:156.38px;width:0.80px;height:17.18px;background:#f7f6f4"></div><div class="a" style="left:274.30px;top:156.38px;width:0.80px;height:17.18px;background:#f7f6f4"></div><div class="a" style="left:357.00px;top:156.38px;width:0.80px;height:17.18px;background:#f7f6f4"></div><div class="a" style="left:442.00px;top:156.38px;width:0.80px;height:17.18px;background:#f7f6f4"></div><div class="a" style="left:191.00px;top:173.56px;width:0.80px;height:17.18px;background:#edecea"></div><div class="a" style="left:274.30px;top:173.56px;width:0.80px;height:17.18px;background:#edecea"></div><div class="a" style="left:357.00px;top:173.56px;width:0.80px;height:17.18px;background:#edecea"></div><div class="a" style="left:442.00px;top:173.56px;width:0.80px;height:17.18px;background:#edecea"></div><div class="a" style="left:98.00px;top:173.56px;width:0.80px;height:17.18px;background:#fbfbfa"></div><div class="a" style="left:191.00px;top:190.74px;width:0.80px;height:17.18px;background:#f7f6f4"></div><div class="a" style="left:274.30px;top:190.74px;width:0.80px;height:17.18px;background:#f7f6f4"></div><div class="a" style="left:357.00px;top:190.74px;width:0.80px;height:17.18px;background:#f7f6f4"></div><div class="a" style="left:442.00px;top:190.74px;width:0.80px;height:17.18px;background:#f7f6f4"></div><div class="a" style="left:191.00px;top:207.92px;width:0.80px;height:17.18px;background:#edecea"></div><div class="a" style="left:274.30px;top:207.92px;width:0.80px;height:17.18px;background:#edecea"></div><div class="a" style="left:357.00px;top:207.92px;width:0.80px;height:17.18px;background:#edecea"></div><div class="a" style="left:442.00px;top:207.92px;width:0.80px;height:17.18px;background:#edecea"></div><div class="a" style="left:98.00px;top:207.92px;width:0.80px;height:17.18px;background:#fbfbfa"></div><div class="a" style="left:191.00px;top:225.10px;width:0.80px;height:17.18px;background:#f7f6f4"></div><div class="a" style="left:274.30px;top:225.10px;width:0.80px;height:17.18px;background:#f7f6f4"></div><div class="a" style="left:357.00px;top:225.10px;width:0.80px;height:17.18px;background:#f7f6f4"></div><div class="a" style="left:442.00px;top:225.10px;width:0.80px;height:17.18px;background:#f7f6f4"></div><div class="a" style="left:191.00px;top:242.28px;width:0.80px;height:17.18px;background:#edecea"></div><div class="a" style="left:274.30px;top:242.28px;width:0.80px;height:17.18px;background:#edecea"></div><div class="a" style="left:357.00px;top:242.28px;width:0.80px;height:17.18px;background:#edecea"></div><div class="a" style="left:442.00px;top:242.28px;width:0.80px;height:17.18px;background:#edecea"></div><div class="a" style="left:98.00px;top:242.28px;width:0.80px;height:17.18px;background:#fbfbfa"></div><div class="a" style="left:191.00px;top:259.46px;width:0.80px;height:17.18px;background:#f7f6f4"></div><div class="a" style="left:274.30px;top:259.46px;width:0.80px;height:17.18px;background:#f7f6f4"></div><div class="a" style="left:357.00px;top:259.46px;width:0.80px;height:17.18px;background:#f7f6f4"></div><div class="a" style="left:442.00px;top:259.46px;width:0.80px;height:17.18px;background:#f7f6f4"></div><div class="a" style="left:191.00px;top:276.64px;width:0.80px;height:17.18px;background:#edecea"></div><div class="a" style="left:274.30px;top:276.64px;width:0.80px;height:17.18px;background:#edecea"></div><div class="a" style="left:357.00px;top:276.64px;width:0.80px;height:17.18px;background:#edecea"></div><div class="a" style="left:442.00px;top:276.64px;width:0.80px;height:17.18px;background:#edecea"></div><div class="a" style="left:98.00px;top:276.64px;width:0.80px;height:17.18px;background:#fbfbfa"></div><div class="a" style="left:191.00px;top:293.82px;width:0.80px;height:17.18px;background:#f7f6f4"></div><div class="a" style="left:274.30px;top:293.82px;width:0.80px;height:17.18px;background:#f7f6f4"></div><div class="a" style="left:357.00px;top:293.82px;width:0.80px;height:17.18px;background:#f7f6f4"></div><div class="a" style="left:442.00px;top:293.82px;width:0.80px;height:17.18px;background:#f7f6f4"></div><div class="a" style="left:191.00px;top:311.00px;width:0.80px;height:17.18px;background:#edecea"></div><div class="a" style="left:274.30px;top:311.00px;width:0.80px;height:17.18px;background:#edecea"></div><div class="a" style="left:357.00px;top:311.00px;width:0.80px;height:17.18px;background:#edecea"></div><div class="a" style="left:442.00px;top:311.00px;width:0.80px;height:17.18px;background:#edecea"></div><div class="a" style="left:98.00px;top:311.00px;width:0.80px;height:17.18px;background:#fbfbfa"></div><div class="a" style="left:191.00px;top:328.18px;width:0.80px;height:17.18px;background:#edecea"></div><div class="a" style="left:274.30px;top:328.18px;width:0.80px;height:17.18px;background:#edecea"></div><div class="a" style="left:357.00px;top:328.18px;width:0.80px;height:17.18px;background:#edecea"></div><div class="a" style="left:442.00px;top:328.18px;width:0.80px;height:17.18px;background:#edecea"></div><div class="a" style="left:98.00px;top:328.18px;width:0.80px;height:17.18px;background:#fbfbfa"></div><div class="a" style="left:191.00px;top:345.36px;width:0.80px;height:17.18px;background:#f7f6f4"></div><div class="a" style="left:274.30px;top:345.36px;width:0.80px;height:17.18px;background:#f7f6f4"></div><div class="a" style="left:357.00px;top:345.36px;width:0.80px;height:17.18px;background:#f7f6f4"></div><div class="a" style="left:442.00px;top:345.36px;width:0.80px;height:17.18px;background:#f7f6f4"></div><div class="a" style="left:191.00px;top:362.54px;width:0.80px;height:17.18px;background:#edecea"></div><div class="a" style="left:274.30px;top:362.54px;width:0.80px;height:17.18px;background:#edecea"></div><div class="a" style="left:357.00px;top:362.54px;width:0.80px;height:17.18px;background:#edecea"></div><div class="a" style="left:442.00px;top:362.54px;width:0.80px;height:17.18px;background:#edecea"></div><div class="a" style="left:98.00px;top:362.54px;width:0.80px;height:17.18px;background:#fbfbfa"></div><div class="a" style="left:191.00px;top:379.72px;width:0.80px;height:17.18px;background:#edecea"></div><div class="a" style="left:274.30px;top:379.72px;width:0.80px;height:17.18px;background:#edecea"></div><div class="a" style="left:357.00px;top:379.72px;width:0.80px;height:17.18px;background:#edecea"></div><div class="a" style="left:442.00px;top:379.72px;width:0.80px;height:17.18px;background:#edecea"></div><div class="a" style="left:98.00px;top:379.72px;width:0.80px;height:17.18px;background:#fbfbfa"></div><div class="a" style="left:191.00px;top:396.90px;width:0.80px;height:17.18px;background:#edecea"></div><div class="a" style="left:274.30px;top:396.90px;width:0.80px;height:17.18px;background:#edecea"></div><div class="a" style="left:357.00px;top:396.90px;width:0.80px;height:17.18px;background:#edecea"></div><div class="a" style="left:442.00px;top:396.90px;width:0.80px;height:17.18px;background:#edecea"></div><div class="a" style="left:98.00px;top:396.90px;width:0.80px;height:17.18px;background:#fbfbfa"></div><div class="a" style="left:191.00px;top:0.00px;width:0.80px;height:17.00px;background:#edecea"></div><div class="a" style="left:191.00px;top:17.10px;width:269.00px;height:0.80px;background:#edecea"></div><div class="a" style="left:0.00px;top:52.80px;width:460.00px;height:0.80px;background:#edecea"></div><div class="a" style="left:7.50px;top:41.50px;font-weight:bold;color:#161513">Journal Source</div><div class="a" style="left:105.00px;top:41.50px;font-weight:bold;color:#161513">Journal Category</div><div class="a" style="left:191.00px;top:6.50px;width:166px;text-align:center;font-weight:bold;color:#161513">2023</div><div class="a" style="left:434.50px;top:6.50px;font-weight:bold;color:#161513">2022</div><div class="a" style="left:191.00px;top:22.50px;width:83.29999999999995px;text-align:center;font-weight:bold;color:#161513;line-height:9.5px;white-space:normal">Journal Debit<br>Amount<br>(Accounted)</div><div class="a" style="left:274.30px;top:22.50px;width:82.70000000000005px;text-align:center;font-weight:bold;color:#161513;line-height:9.5px;white-space:normal">Journal Credit<br>Amount<br>(Accounted)</div><div class="a" style="left:354.50px;top:22.50px;width:85.0px;text-align:center;font-weight:bold;color:#161513;line-height:9.5px;white-space:normal">Journal Debit<br>Amount<br>(Accounted)</div><div class="a" style="left:434px;top:34px;width:0;height:0;border-left:3.5px solid transparent;border-right:3.5px solid transparent;border-bottom:4.5px solid #161513"></div><div class="a" style="left:0.00px;top:406.50px;width:468.00px;height:8.00px;background:#fff"></div><div class="a" style="left:0.00px;top:406.50px;width:468.00px;height:0.80px;background:#edecea"></div><div class="a" style="left:193px;top:408.3px;width:137px;height:5px;border-radius:2.5px;background:#c8c8c8"></div><div class="a" style="left:460.00px;top:0.00px;width:8.00px;height:414.00px;background:#fff"></div><div class="a" style="left:462px;top:54.5px;width:4px;height:106px;border-radius:2px;background:#cfcfcf"></div></div>
<div id="bbar"></div>
<div class="tb" style="left:7.6px;top:578.5px;font-size:8.5px;font-weight:bold;color:#161513">Summary</div>
<div class="a" style="left:0;top:592.5px;width:54px;height:1.5px;background:#4f7a3f"></div>
<div class="tb" style="left:70px;top:578.5px;font-size:8.4px">Analysis</div>
<div class="tb" style="left:124.6px;top:578.5px;font-size:8.4px">Details</div>
<svg class="a" style="left:0;top:0" width="1056" height="594"><path d="M16.4 13.8H7.6M10.8 10.2L7.2 13.8L10.8 17.4" fill="none" stroke="#f4f4f4" stroke-width="1.5"/><rect x="24.3" y="0" width="1" height="26" fill="#5c5e62"/><rect x="0" y="26" width="1056" height="1" fill="#36383c"/><path d="M37.2 9.3V17.9H46" fill="none" stroke="#f4f4f4" stroke-width="1.5"/><circle cx="39.6" cy="15.2" r="1.45" fill="#f4f4f4"/><circle cx="42.2" cy="12.7" r="1.45" fill="#f4f4f4"/><circle cx="44.8" cy="10.1" r="1.45" fill="#f4f4f4"/><circle cx="44.8" cy="15.1" r="1.45" fill="#f4f4f4"/><path d="M795.1 16.7A2.9 2.9 0 1 0 791 12.5L788 15.6M787.8 12.6V16.2H791.3" fill="none" stroke="#f4f4f4" stroke-width="1.35" stroke-linecap="round" stroke-linejoin="round"/><path d="M816.7 16.7A2.9 2.9 0 1 1 820.8 12.5L823.2 15.3M823.5 12.6V16.2H820" fill="none" stroke="#f4f4f4" stroke-width="1.35" stroke-linecap="round" stroke-linejoin="round"/><path d="M844.2 9.8L851.2 13.6L844.2 17.4Z" fill="none" stroke="#f4f4f4" stroke-width="1.2" stroke-linejoin="round"/><path d="M870.3 17.6V11.2Q870.3 9.5 874.5 9.5Q878.7 9.5 878.7 11.2V13.2M870.3 12.9H878.7" fill="none" stroke="#f4f4f4" stroke-width="1.2"/><rect x="871.6" y="10.5" width="5.8" height="1.3" fill="#a9abae"/><path d="M873.6 14.8A1.5 1.5 0 1 0 873.6 17.4" fill="none" stroke="#f4f4f4" stroke-width="1.1"/><path d="M878.3 16.6A1.7 1.7 0 1 0 876.6 17.9" fill="none" stroke="#f4f4f4" stroke-width="1.1"/><path d="M877.4 17H879.6V18.7Z" fill="#f4f4f4"/><path d="M897.5 9.6H906.4V18.2L904.4 16.3H897.5Z" fill="none" stroke="#8e9094" stroke-width="1.1" stroke-linejoin="round"/><path d="M899.3 11.8H904.6M899.3 13.4H904.6M899.3 15H904.6" stroke="#8e9094" stroke-width="0.8"/><path d="M911.3 12.2H918L914.65 16.2Z" fill="#f4f4f4"/><path d="M937 16.3C935.8 15.3 935.3 14.2 935.3 13.2A3.7 3.7 0 0 1 942.7 13.2C942.7 14.2 942.2 15.3 941 16.3V17.4H937Z" fill="none" stroke="#f4f4f4" stroke-width="1.3"/><path d="M937.5 18.6H940.5" stroke="#f4f4f4" stroke-width="1"/><path d="M937.4 12.6H940.6L939 14.8Z" fill="#f4f4f4"/><rect x="962.5" y="9.6" width="8.6" height="8.6" fill="none" stroke="#f4f4f4" stroke-width="1.2"/><path d="M964.8 16L969 11.8M965.8 11.5H969.3V15" fill="none" stroke="#f4f4f4" stroke-width="1.2"/><path d="M989.5 9.6H996.5L998.4 11.5V18.2H989.5Z" fill="none" stroke="#d6d6d6" stroke-width="1.2"/><path d="M991.6 9.8V12.3H995.6V9.8M991.4 18V15.2H996.6V18" fill="none" stroke="#d6d6d6" stroke-width="1.1"/><path d="M1004.4 11.9H1010.1L1007.25 16Z" fill="#f4f4f4"/><path d="M985.2 37.6H994.2L990.3 41.8V45L988.9 44V41.8Z" fill="none" stroke="#222" stroke-width="1.05" stroke-linejoin="round"/><circle cx="992.6" cy="44.3" r="1.3" fill="#fff" stroke="#222" stroke-width="0.9"/><rect x="1001.2" y="33.5" width="0.9" height="15.5" fill="#d4d4d4"/><path d="M1019.6 36.9H1025.2V46.3H1019.6Z" fill="none" stroke="#222" stroke-width="1.3" stroke-linejoin="round"/><path d="M1017.4 37.6L1019.6 39.3M1017.4 41.6H1019.6M1017.4 45.6L1019.6 43.9M1027.4 37.6L1025.2 39.3M1027.4 41.6H1025.2M1027.4 45.6L1025.2 43.9" stroke="#222" stroke-width="1.1"/><circle cx="1022.4" cy="39.6" r="0.8" fill="#222"/><circle cx="1022.4" cy="43.6" r="0.8" fill="#222"/><circle cx="1040.2" cy="37.6" r="0.9" fill="#222"/><circle cx="1040.2" cy="41.2" r="0.9" fill="#222"/><circle cx="1040.2" cy="44.9" r="0.9" fill="#222"/><path d="M405.8 37.5L408.9 40.6L407.6 41L405.5 43.1L405.7 44.3L401.9 40.5L403.1 40.7L405.2 38.6Z" fill="none" stroke="#222" stroke-width="0.95" stroke-linejoin="round"/><path d="M403.6 42.1L401.9 43.8" stroke="#222" stroke-width="0.95"/><rect x="0.6000000000000001" y="315.8" width="1.4" height="2" fill="#555"/><rect x="0.6000000000000001" y="318.8" width="1.4" height="2" fill="#555"/><rect x="0.6000000000000001" y="321.8" width="1.4" height="2" fill="#555"/><rect x="0.6000000000000001" y="324.8" width="1.4" height="2" fill="#555"/><rect x="4.8" y="315.8" width="1.4" height="2" fill="#555"/><rect x="4.8" y="318.8" width="1.4" height="2" fill="#555"/><rect x="4.8" y="321.8" width="1.4" height="2" fill="#555"/><rect x="4.8" y="324.8" width="1.4" height="2" fill="#555"/><rect x="947.6" y="579.3" width="8" height="8.3" fill="none" stroke="#bdbdbd" stroke-width="0.9"/><path d="M951.6 579.3V587.6M947.6 583.45H955.6" stroke="#bdbdbd" stroke-width="0.8"/><path d="M960.9 582H966.4L963.65 585.7Z" fill="#9a9a9a"/><path d="M975.8 579.8H982.3V583.6L979.05 587.6L975.8 583.6Z" fill="none" stroke="#76a545" stroke-width="1.1" stroke-linejoin="round"/><path d="M976 581.6H982.1" stroke="#76a545" stroke-width="1.2"/><path d="M977.4 583.8H980.7L979.05 585.6Z" fill="none" stroke="#76a545" stroke-width="0.8"/><path d="M997.4 579.8L993 584.2H996.8L996.2 587.4L1000.8 582.9H997.1Z" fill="none" stroke="#76a545" stroke-width="1" stroke-linejoin="round"/><rect x="1010" y="575.3" width="0.8" height="14.3" fill="#d8d8d8"/><rect x="1018.8" y="578.6" width="9.6" height="9.8" fill="none" stroke="#1a1a1a" stroke-width="1.2"/><rect x="1018.8" y="578.6" width="2.8" height="9.8" fill="#1a1a1a"/><rect x="1036.8" y="578.6" width="9.6" height="9.8" fill="none" stroke="#1a1a1a" stroke-width="1.2"/><rect x="1040.2" y="579.8" width="1.4" height="7.4" fill="#1a1a1a"/><circle cx="185.9" cy="583" r="4.3" fill="none" stroke="#444" stroke-width="0.9"/><circle cx="185.9" cy="583" r="1.8" fill="#444"/></svg>
</body></html>
